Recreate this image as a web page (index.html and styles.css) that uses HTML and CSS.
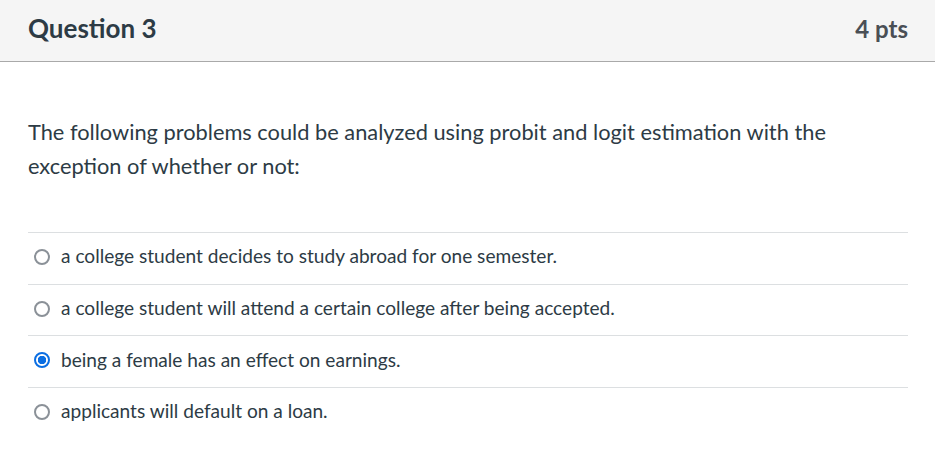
FILE: index.html
```html
<!DOCTYPE html>
<html>
<head>
<meta charset="utf-8">
<link rel="stylesheet" href="styles.css">
</head>
<body>
<div class="question">
  <div class="header">
    <h2 class="title">Question 3</h2>
    <div class="pts">4 pts</div>
  </div>
  <div class="content">
    <p class="text">The following problems could be analyzed using probit and logit estimation with the exception of whether or not:</p>
    <ul class="answers">
      <li class="answer"><span class="radio"></span><span class="label">a college student decides to study abroad for one semester.</span></li>
      <li class="answer"><span class="radio"></span><span class="label">a college student will attend a certain college after being accepted.</span></li>
      <li class="answer"><span class="radio checked"></span><span class="label">being a female has an effect on earnings.</span></li>
      <li class="answer"><span class="radio"></span><span class="label">applicants will default on a loan.</span></li>
    </ul>
  </div>
</div>
</body>
</html>
```

FILE: styles.css
```css
* { box-sizing: border-box; }
body {
  margin: 0;
  background: #fff;
  font-family: Lato, "Liberation Sans", sans-serif;
  color: #2d3b45;
}
.header {
  display: flex;
  justify-content: space-between;
  align-items: center;
  height: 62px;
  padding: 0 27px 5px 28px;
  background: #f5f5f5;
  border-bottom: 1px solid #a9a9a9;
}
.title {
  margin: 0;
  font-size: 26px;
  font-weight: 700;
  color: #2d3b45;
}
.pts {
  font-size: 24px;
  font-weight: 700;
  color: #4a4f55;
}
.content {
  padding: 53px 27px 0 28px;
}
.text {
  margin: 0 0 49px 0;
  font-size: 21.8px;
  line-height: 34px;
  color: #2d3b45;
}
.answers {
  list-style: none;
  margin: 0;
  padding: 0;
}
.answer {
  display: flex;
  align-items: center;
  height: 51.7px;
  border-top: 1px solid #dcdfe1;
  padding: 0 0 5px 6px;
}
.radio {
  width: 16px;
  height: 16px;
  border: 2px solid #8b9198;
  border-radius: 50%;
  margin-right: 11px;
  flex: none;
  position: relative;
  top: 1px;
}
.radio.checked {
  border: 2.5px solid #0b6ee2;
  background: radial-gradient(circle, #0b6ee2 0 4px, #fff 4.5px);
}
.label {
  font-size: 19.1px;
  color: #2d3b45;
}
```
